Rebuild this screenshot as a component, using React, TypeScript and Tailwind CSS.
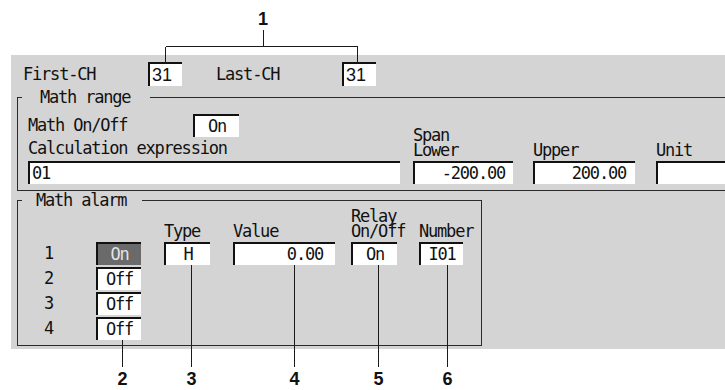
import React from "react"

// Math channel settings screen with numbered callouts
const FONT = "font-['DejaVu_Sans_Mono',monospace] text-[17px] tracking-[-1.2px] text-[#111]"
const BOX = "border-t-2 border-l-2 border-[#111] flex items-center"

type FieldProps = {
  className: string
  dark?: boolean
  children?: React.ReactNode
}

function Field({ className, dark, children }: FieldProps) {
  const tone = dark ? "bg-[#6a6a6a] text-[#e4e4e4]" : "bg-white"
  return <div className={`${BOX} ${tone} ${className}`}>{children}</div>
}

function Label({ lines }: { lines: string[] }) {
  return (
    <div className="mb-[3px] flex flex-col whitespace-pre">
      {lines.map((l) => (
        <div key={l} className="h-[15px] leading-[15px]">
          {l}
        </div>
      ))}
    </div>
  )
}

const CALLOUTS = [
  { n: "2", x: 122, y1: 340 },
  { n: "3", x: 191, y1: 265 },
  { n: "4", x: 294, y1: 265 },
  { n: "5", x: 378, y1: 265 },
  { n: "6", x: 447, y1: 265 },
]

function Callouts() {
  return (
    <div className="pointer-events-none absolute inset-0">
      <svg width={725} height={390} className="absolute inset-0" shapeRendering="crispEdges">
        <g stroke="#1a1a1a" strokeWidth={1} fill="none">
          <line x1={263.5} y1={30} x2={263.5} y2={46.5} />
          <line x1={165.5} y1={46.5} x2={357.5} y2={46.5} />
          <line x1={165.5} y1={46.5} x2={165.5} y2={62} />
          <line x1={357.5} y1={46.5} x2={357.5} y2={62} />
          {CALLOUTS.map((c) => (
            <line key={c.n} x1={c.x + 0.5} y1={c.y1} x2={c.x + 0.5} y2={367} />
          ))}
        </g>
      </svg>
      <div className="absolute left-[263px] top-[10px] -translate-x-1/2 font-['Liberation_Sans',sans-serif] text-[18px] font-bold leading-none tracking-normal text-[#111]">
        1
      </div>
      {CALLOUTS.map((c) => (
        <div
          key={c.n}
          className="absolute top-[370px] -translate-x-1/2 font-['Liberation_Sans',sans-serif] text-[18px] font-bold leading-none tracking-normal text-[#111]"
          style={{ left: c.x + 0.5 }}
        >
          {c.n}
        </div>
      ))}
    </div>
  )
}

export default function App() {
  return (
    <div className={`relative h-[390px] w-[725px] overflow-hidden bg-white ${FONT}`}>
      <div className="h-[55px]" />

      <div className="ml-[11px] h-[294px] w-[714px] overflow-hidden bg-[#d4d4d4] pt-[7px]">
        {/* Channel range */}
        <div className="flex h-[24px] items-center pl-[12px] leading-[24px]">
          <span className="w-[125px]">First-CH</span>
          <Field className="h-[24px] w-[34px] pl-[2px] font-['Liberation_Sans',sans-serif] text-[18px] tracking-normal">31</Field>
          <span className="ml-[34px] w-[126px]">Last-CH</span>
          <Field className="h-[24px] w-[34px] pl-[2px] font-['Liberation_Sans',sans-serif] text-[18px] tracking-normal">31</Field>
        </div>

        {/* Math range */}
        <fieldset className="mt-[3px] ml-[6px] w-[740px] min-w-0 border-t border-b border-l border-[#2a2a2a] pb-[6px]">
          <legend className="ml-[4px] pl-[18px] pr-[20px] leading-[16px]">Math range</legend>
          <div className="flex items-end pl-[10px]">
            <div className="flex w-[372px] flex-col">
              <div className="mt-[9px] flex h-[23px] items-center">
                <span className="w-[165px]">Math On/Off</span>
                <Field className="h-[23px] w-[46px] justify-center">On</Field>
              </div>
              <div className="flex h-[24px] items-center">Calculation expression</div>
              <Field className="h-[23px] w-[372px] pl-[2px]">01</Field>
            </div>
            <div className="ml-[13px] flex w-[100px] flex-col">
              <Label lines={["Span", "Lower"]} />
              <Field className="h-[23px] w-[100px] justify-end pr-[8px]">-200.00</Field>
            </div>
            <div className="ml-[20px] flex w-[102px] flex-col">
              <Label lines={["Upper"]} />
              <Field className="h-[23px] w-[102px] justify-end pr-[9px]">200.00</Field>
            </div>
            <div className="ml-[21px] flex w-[90px] flex-col">
              <Label lines={["Unit"]} />
              <Field className="h-[23px] w-[90px]" />
            </div>
          </div>
        </fieldset>

        {/* Math alarm */}
        <fieldset className="mt-[1px] ml-[6px] w-[465px] min-w-0 border border-[#2a2a2a] pb-[5px]">
          <legend className="ml-[4px] pl-[14px] pr-[16px] leading-[16px]">Math alarm</legend>
          <div className="flex items-start">
            <div className="flex w-[78px] flex-col gap-[2px] pt-[34px]">
              {["1", "2", "3", "4"].map((n) => (
                <div key={n} className="flex h-[23px] items-center pl-[26px]">
                  {n}
                </div>
              ))}
            </div>
            <div className="flex w-[45px] flex-col gap-[2px] pt-[34px]">
              <Field dark className="h-[23px] w-[45px] justify-center">On</Field>
              <Field className="h-[23px] w-[45px] justify-center">Off</Field>
              <Field className="h-[23px] w-[45px] justify-center">Off</Field>
              <Field className="h-[23px] w-[45px] justify-center">Off</Field>
            </div>
            <div className="ml-[23px] flex w-[46px] flex-col">
              <div className="flex h-[34px] flex-col justify-end">
                <Label lines={["Type"]} />
              </div>
              <Field className="h-[23px] w-[46px] justify-center">H</Field>
            </div>
            <div className="ml-[23px] flex w-[102px] flex-col">
              <div className="flex h-[34px] flex-col justify-end">
                <Label lines={["Value"]} />
              </div>
              <Field className="h-[23px] w-[102px] justify-end pr-[12px]">0.00</Field>
            </div>
            <div className="ml-[16px] flex w-[46px] flex-col">
              <div className="flex h-[34px] flex-col justify-end">
                <Label lines={["Relay", "On/Off"]} />
              </div>
              <Field className="h-[23px] w-[46px] justify-center">On</Field>
            </div>
            <div className="ml-[22px] flex w-[44px] flex-col">
              <div className="flex h-[34px] flex-col justify-end">
                <Label lines={["Number"]} />
              </div>
              <Field className="h-[23px] w-[44px] justify-center">I01</Field>
            </div>
          </div>
        </fieldset>
      </div>

      <Callouts />
    </div>
  )
}
